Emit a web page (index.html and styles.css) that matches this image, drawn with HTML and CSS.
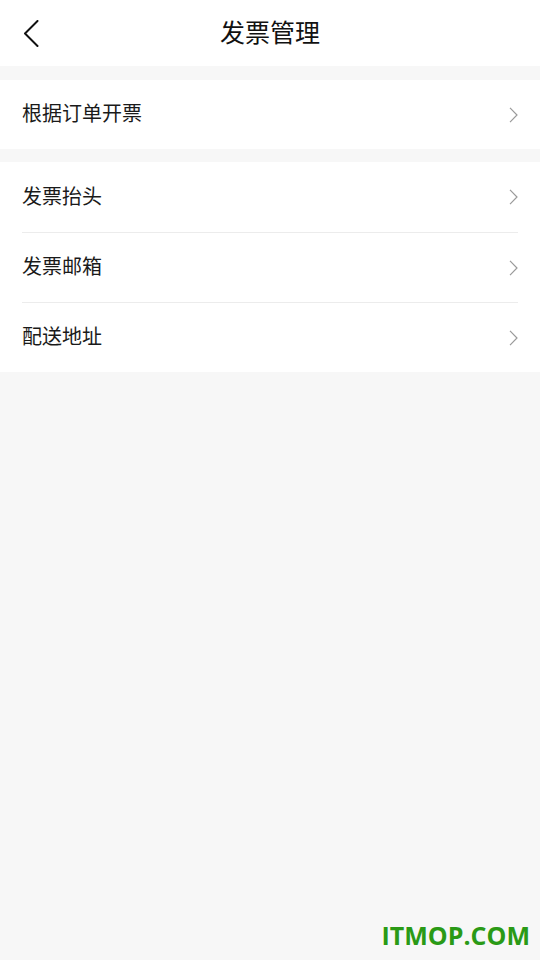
FILE: index.html
```html
<!DOCTYPE html>
<html lang="zh-CN">
<head>
    <meta charset="UTF-8">
    <meta name="viewport" content="width=device-width, initial-scale=1.0">
    <title>发票管理</title>
    <link rel="stylesheet" href="styles.css">
</head>
<body>
    <div class="page">
        <header class="nav-bar">
            <a class="back-btn" href="#">
                <svg width="16" height="27" viewBox="0 0 16 27">
                    <polyline points="14.5,1 2,13.5 14.5,26" fill="none" stroke="#111" stroke-width="2" stroke-linecap="round" stroke-linejoin="round"/>
                </svg>
            </a>
            <h1>发票管理</h1>
        </header>

        <div class="group group-first">
            <a class="cell" href="#">
                <span>根据订单开票</span>
                <svg class="arrow" width="9" height="16" viewBox="0 0 9 16"><polyline points="1,0.8 8,8 1,15.2" fill="none" stroke="#9a9a9a" stroke-width="1.2"/></svg>
            </a>
        </div>

        <div class="group">
            <a class="cell" href="#">
                <span>发票抬头</span>
                <svg class="arrow" width="9" height="16" viewBox="0 0 9 16"><polyline points="1,0.8 8,8 1,15.2" fill="none" stroke="#9a9a9a" stroke-width="1.2"/></svg>
            </a>
            <a class="cell" href="#">
                <span>发票邮箱</span>
                <svg class="arrow" width="9" height="16" viewBox="0 0 9 16"><polyline points="1,0.8 8,8 1,15.2" fill="none" stroke="#9a9a9a" stroke-width="1.2"/></svg>
            </a>
            <a class="cell" href="#">
                <span>配送地址</span>
                <svg class="arrow" width="9" height="16" viewBox="0 0 9 16"><polyline points="1,0.8 8,8 1,15.2" fill="none" stroke="#9a9a9a" stroke-width="1.2"/></svg>
            </a>
        </div>

        <div class="watermark">ITMOP.COM</div>
    </div>
</body>
</html>
```

FILE: styles.css
```css
body {
    margin: 0;
    font-family: "Noto Sans CJK SC", "Noto Sans", sans-serif;
    background-color: #f7f7f7;
    color: #111;
}

.page {
    position: relative;
    height: 960px;
    overflow: hidden;
}

.nav-bar {
    position: relative;
    height: 66px;
    background: #fff;
    display: flex;
    align-items: center;
    justify-content: center;
}

.nav-bar h1 {
    margin: 0 0 3px;
    font-size: 25px;
    line-height: 1;
    font-weight: 400;
    color: #111;
}

.back-btn {
    position: absolute;
    left: 23px;
    top: 20px;
    width: 16px;
    height: 27px;
    display: block;
}

.back-btn svg {
    display: block;
}

.group {
    background: #fff;
    margin-top: 13px;
}

.group-first {
    margin-top: 14px;
}

.cell {
    box-sizing: border-box;
    display: flex;
    align-items: center;
    justify-content: space-between;
    height: 70px;
    margin: 0 22px;
    border-top: 1px solid #ececec;
    font-size: 20px;
    line-height: 1;
    color: #1a1a1a;
    text-decoration: none;
}

.cell span {
    padding-bottom: 3px;
}

.cell:first-child {
    border-top: none;
}

.group-first .cell {
    height: 69px;
}

.arrow {
    display: block;
}

.watermark {
    position: absolute;
    right: 10px;
    bottom: 8px;
    font-family: "Open Sans", "Liberation Sans", sans-serif;
    font-weight: 700;
    font-size: 25px;
    color: #2a9a16;
}
```
